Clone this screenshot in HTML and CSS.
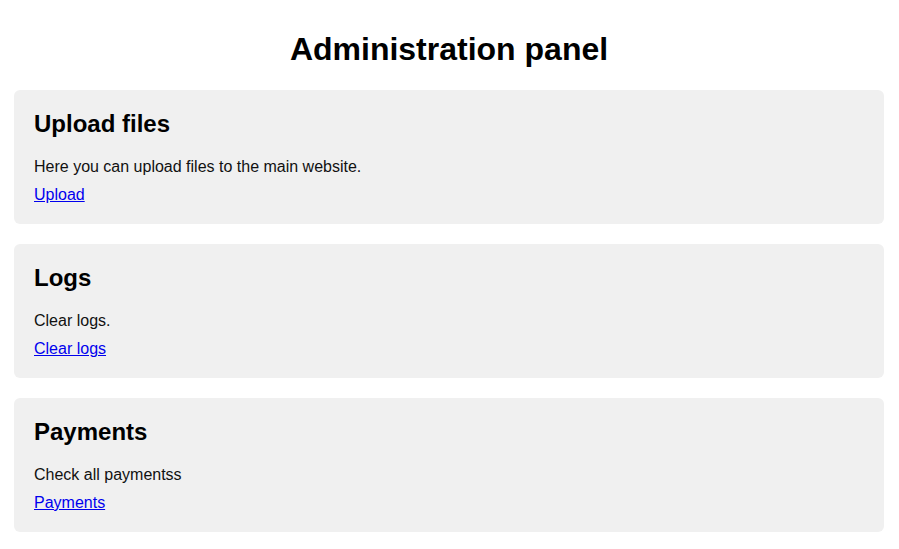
FILE: index.html
```html
<!DOCTYPE html>
<html lang="en">
<head>
<meta charset="utf-8">
<title>Administration panel</title>
<link rel="stylesheet" href="styles.css">
</head>
<body>
<div class="page">
  <h1 class="title">Administration panel</h1>
  <section class="card">
    <h2 class="card-title">Upload files</h2>
    <p class="card-text">Here you can upload files to the main website.</p>
    <a class="card-link" href="#">Upload</a>
  </section>
  <section class="card">
    <h2 class="card-title">Logs</h2>
    <p class="card-text">Clear logs.</p>
    <a class="card-link" href="#">Clear logs</a>
  </section>
  <section class="card">
    <h2 class="card-title">Payments</h2>
    <p class="card-text">Check all paymentss</p>
    <a class="card-link" href="#">Payments</a>
  </section>
</div>
</body>
</html>
```
FILE: styles.css
```css
html, body {
  margin: 0;
  padding: 0;
  background: #ffffff;
}
body {
  font-family: "Liberation Sans", Arial, sans-serif;
  color: #111111;
}
.page {
  padding: 31px 15px 0 14px;
  display: flex;
  flex-direction: column;
  gap: 20px;
}
.title {
  margin: 0 0 2px;
  font-size: 32px;
  line-height: normal;
  font-weight: bold;
  text-align: center;
  color: #000000;
}
.card {
  background: #f0f0f0;
  border-radius: 6px;
  padding: 20px;
  display: flex;
  flex-direction: column;
  align-items: flex-start;
}
.card-title {
  margin: 0 0 20px;
  font-size: 24px;
  line-height: normal;
  font-weight: bold;
  color: #000000;
}
.card-text {
  margin: 0 0 10px;
  font-size: 16px;
  line-height: normal;
}
.card-link {
  font-size: 16px;
  line-height: normal;
  color: #0000ee;
  text-decoration: underline;
}
```
